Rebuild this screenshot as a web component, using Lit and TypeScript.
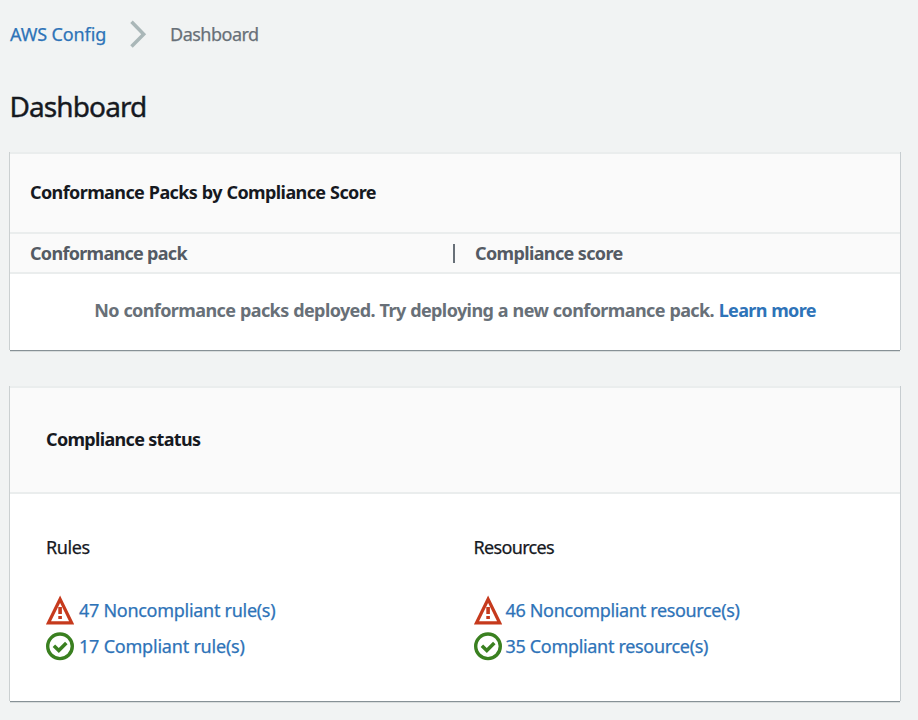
import { LitElement, html, css, svg } from "lit";
import { customElement, property } from "lit/decorators.js";

type Status = "warning" | "success";

@customElement("status-icon")
class StatusIcon extends LitElement {
  @property() status: Status = "success";

  static styles = css`
    :host { display: block; width: 28px; height: 30px; flex: none; }
    svg { display: block; fill: none; }
    .warning { stroke: #c63a1d; }
    .success { stroke: #3a8020; }
  `;

  render() {
    return html`<svg class=${this.status} width="28" height="30" viewBox="0 0 28 30">
      ${this.status === "warning"
        ? svg`<path d="M14.1 4.2 25.6 27.8H2.5Z" stroke-width="3.2" stroke-miterlimit="2.7"/>
              <path d="M14.1 12v6.9M14.1 21v3" stroke-width="3.6"/>`
        : svg`<circle cx="14" cy="15.3" r="12.3" stroke-width="3.4"/>
              <path d="M7.9 14.8 12.8 19.6 20.3 12" stroke-width="3.5"/>`}
    </svg>`;
  }
}

@customElement("status-group")
class StatusGroup extends LitElement {
  @property() heading = "";
  @property({ attribute: false }) items: { status: Status; text: string }[] = [];

  static styles = css`
    :host { display: block; }
    .heading { margin: 0 0 33px; font-size: 18px; font-weight: 400; line-height: 24px; color: #16191f; letter-spacing: var(--heading-spacing); }
    .row { display: flex; align-items: center; gap: var(--icon-gap); height: 36px; }
    a { color: #2e73b8; line-height: 24px; white-space: nowrap; }
    .warning { letter-spacing: var(--warning-spacing); }
    .success { letter-spacing: var(--success-spacing); }
  `;

  render() {
    return html`
      <h3 class="heading">${this.heading}</h3>
      ${this.items.map((i) => html`<div class="row">
        <status-icon .status=${i.status}></status-icon><a class=${i.status}>${i.text}</a>
      </div>`)}
    `;
  }
}

@customElement("app-root")
class AppRoot extends LitElement {
  static styles = css`
    :host {
      display: block; box-sizing: border-box; height: 720px; overflow: hidden;
      padding: 22px 18px 0 10px; background: #f1f3f3; color: #16191f;
      font: 400 18px/24px "Noto Sans", sans-serif; white-space: nowrap;
      -webkit-text-stroke: 0.25px;
    }
    a { color: #2e73b8; }
    h1, h2, p { margin: 0; font-size: 18px; }
    h2, .columns, .empty { -webkit-text-stroke: 0; }
    .crumbs { display: flex; align-items: center; height: 24px; }
    .root { width: 120px; letter-spacing: -0.13px; }
    .chevron { width: 18px; height: 28px; margin-right: 22px; fill: none; stroke: #aab7b8; stroke-width: 3.5; }
    .here { color: #687078; letter-spacing: -0.5px; }
    h1 { margin: 42px 0 28px -0.6px; font-size: 28px; font-weight: 400; line-height: 36px; letter-spacing: -0.88px; -webkit-text-stroke: 0.4px; }
    .card {
      background: #fff; border-top: 2px solid #eaeded;
      box-shadow: -1px 0 #cbd0d1, 1px 0 #c7cdd0, 0 1px #879196, 0 2px #d9dddd;
    }
    .card + .card { margin-top: 36px; }
    .head { background: #fafafa; border-bottom: 2px solid #eaeded; }
    .packs-title { padding: 26px 20px 28px; letter-spacing: -0.6px; word-spacing: 0.5px; }
    .columns {
      display: grid; grid-template-columns: 445px 1fr; padding: 7px 0;
      font-weight: 700; color: #545b64;
    }
    .column { display: flex; align-items: center; justify-content: space-between; padding-left: 20px; }
    .column:first-child { letter-spacing: -0.7px; }
    .column:last-child { letter-spacing: -0.63px; }
    .divider { width: 2px; height: 19px; background: #687078; }
    .empty { padding: 24px 0 28px; text-align: center; font-weight: 700; color: #687078; letter-spacing: -0.6px; word-spacing: 0.5px; }
    .empty a { letter-spacing: -0.66px; }
    .status-title { padding: 39px 36px 41px; letter-spacing: -0.68px; }
    .groups { display: grid; grid-template-columns: 428px 1fr; padding: 41px 0 37px 36px; }
    .rules { --heading-spacing: -0.4px; --icon-gap: 5px; --warning-spacing: -0.284px; --success-spacing: -0.21px; }
    .resources { --heading-spacing: -0.66px; --icon-gap: 4px; --warning-spacing: -0.34px; --success-spacing: -0.32px; }
    .resources { margin-left: -0.5px; }
  `;

  render() {
    return html`
      <nav class="crumbs">
        <a class="root">AWS Config</a>
        <svg class="chevron" viewBox="0 0 18 28"><path d="M1.5 1.7 13.7 14.2 1.5 26.6"/></svg>
        <span class="here">Dashboard</span>
      </nav>
      <h1>Dashboard</h1>
      <section class="card">
        <h2 class="head packs-title">Conformance Packs by Compliance Score</h2>
        <div class="head columns">
          <div class="column">Conformance pack<span class="divider"></span></div>
          <div class="column">Compliance score</div>
        </div>
        <p class="empty">No conformance packs deployed. Try deploying a new conformance pack. <a>Learn more</a></p>
      </section>
      <section class="card">
        <h2 class="head status-title">Compliance status</h2>
        <div class="groups">
          <status-group class="rules" heading="Rules" .items=${[
            { status: "warning", text: "47 Noncompliant rule(s)" },
            { status: "success", text: "17 Compliant rule(s)" },
          ]}></status-group>
          <status-group class="resources" heading="Resources" .items=${[
            { status: "warning", text: "46 Noncompliant resource(s)" },
            { status: "success", text: "35 Compliant resource(s)" },
          ]}></status-group>
        </div>
      </section>
    `;
  }
}
